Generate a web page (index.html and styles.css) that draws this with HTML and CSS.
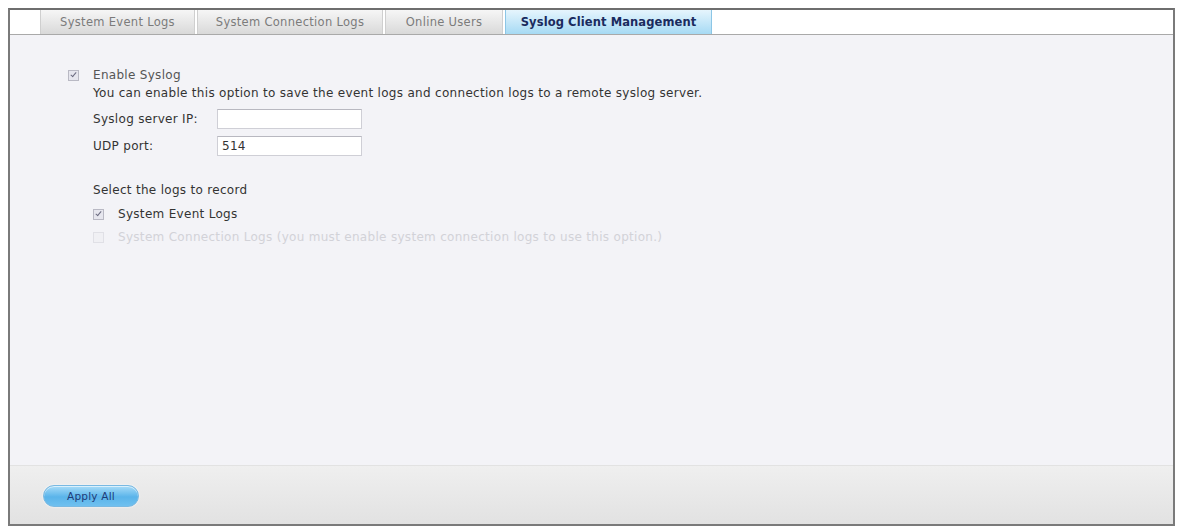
FILE: index.html
```html
<!DOCTYPE html>
<html>
<head>
<meta charset="utf-8">
<link rel="stylesheet" href="styles.css">
</head>
<body>
<div class="frame">
  <div class="tabbar">
    <div class="tab t1">System Event Logs</div>
    <div class="tab t2">System Connection Logs</div>
    <div class="tab t3">Online Users</div>
    <div class="tab t4 active">Syslog Client Management</div>
  </div>
  <div class="content">
    <label class="check-row top">
      <span class="cb checked"></span>
      <span>Enable Syslog</span>
    </label>
    <div class="indent">
      <p class="desc">You can enable this option to save the event logs and connection logs to a remote syslog server.</p>
      <div class="field">
        <span class="flabel">Syslog server IP:</span>
        <span class="input"></span>
      </div>
      <div class="field">
        <span class="flabel">UDP port:</span>
        <span class="input">514</span>
      </div>
      <p class="section">Select the logs to record</p>
      <label class="check-row sub">
        <span class="cb checked"></span>
        <span class="dark">System Event Logs</span>
      </label>
      <label class="check-row sub disabled">
        <span class="cb"></span>
        <span>System Connection Logs (you must enable system connection logs to use this option.)</span>
      </label>
    </div>
  </div>
  <div class="footer">
    <button class="apply">Apply All</button>
  </div>
</div>
</body>
</html>
```
FILE: styles.css
```css
html, body {
  margin: 0;
  padding: 0;
  background: #ffffff;
}
body {
  padding: 8px 0 0 8px;
  font-family: "DejaVu Sans", Verdana, sans-serif;
  font-size: 12px;
  letter-spacing: 0.3px;
  color: #333;
}
.frame {
  width: 1163px;
  height: 514px;
  border: 2px solid #7a7a7a;
  border-top-color: #6e6e6e;
  display: flex;
  flex-direction: column;
  background: #f3f3f7;
}
.tabbar {
  height: 24px;
  flex: none;
  background: #ffffff;
  border-bottom: 1px solid #a9a9a9;
  display: flex;
  gap: 2px;
  padding-left: 30px;
}
.tab {
  box-sizing: border-box;
  display: flex;
  align-items: center;
  justify-content: center;
  background: linear-gradient(#f6f6f6, #d9d9d9);
  border-left: 1px solid #cfcfcf;
  border-right: 1px solid #cfcfcf;
  color: #7b7b7b;
  font-size: 11.5px;
  letter-spacing: 0.3px;
  white-space: nowrap;
}
.t1 { width: 155px; }
.t2 { width: 186px; }
.t3 { width: 118px; }
.t4 { width: 207px; }
.tab.active {
  background: linear-gradient(#e6f5fd, #a6daf4);
  border-color: #8cc6e6;
  color: #1a2b5e;
  font-weight: bold;
  letter-spacing: 0.1px;
}
.content {
  flex: 1;
  padding: 31px 0 0 58px;
}
.check-row {
  display: flex;
  align-items: center;
  gap: 14px;
  height: 18px;
  color: #555;
}
.cb {
  width: 9px;
  height: 9px;
  border: 1px solid #b9b9c4;
  background: #e6e6ee;
  position: relative;
  flex: none;
}
.cb.checked::after {
  content: "";
  position: absolute;
  left: 3px;
  top: 0px;
  width: 2px;
  height: 5px;
  border: solid #6b6b80;
  border-width: 0 1.5px 1.5px 0;
  transform: rotate(40deg);
}
.indent {
  padding-left: 25px;
}
.desc {
  margin: 0;
  height: 18px;
  line-height: 18px;
  color: #333;
}
.field {
  display: flex;
  align-items: center;
  height: 20px;
  margin-top: 7px;
}
.flabel {
  width: 124px;
  color: #333;
}
.input {
  width: 139px;
  height: 18px;
  border: 1px solid #cfcfd6;
  border-top-color: #b8b8c0;
  background: #ffffff;
  display: flex;
  align-items: center;
  padding-left: 4px;
  color: #333;
}
.section {
  margin: 25px 0 0 0;
  height: 18px;
  line-height: 18px;
  color: #333;
}
.check-row.sub {
  margin-top: 6px;
}
.check-row.sub.disabled {
  margin-top: 5px;
  color: #d2d2d8;
}
.check-row.disabled .cb {
  border-color: #e0e0e6;
  background: #f0f0f4;
}
.dark { color: #333; }
.footer {
  height: 58px;
  flex: none;
  border-top: 1px solid #e2e2e2;
  background: linear-gradient(#efefef, #e2e2e2);
  display: flex;
  align-items: center;
  padding-left: 33px;
}
.apply {
  width: 96px;
  height: 22px;
  border-radius: 11px;
  border: 1px solid #79b9e2;
  background: linear-gradient(#a8dcf8, #5ab4ea 55%, #6fc0ef);
  box-shadow: 0 0 2px #ffffff, inset 0 1px 0 rgba(255,255,255,0.6);
  color: #1f3b78;
  font-family: "DejaVu Sans", Verdana, sans-serif;
  font-size: 10.5px;
  letter-spacing: 0.2px;
  padding: 0;
  margin-top: 1px;
}
```
